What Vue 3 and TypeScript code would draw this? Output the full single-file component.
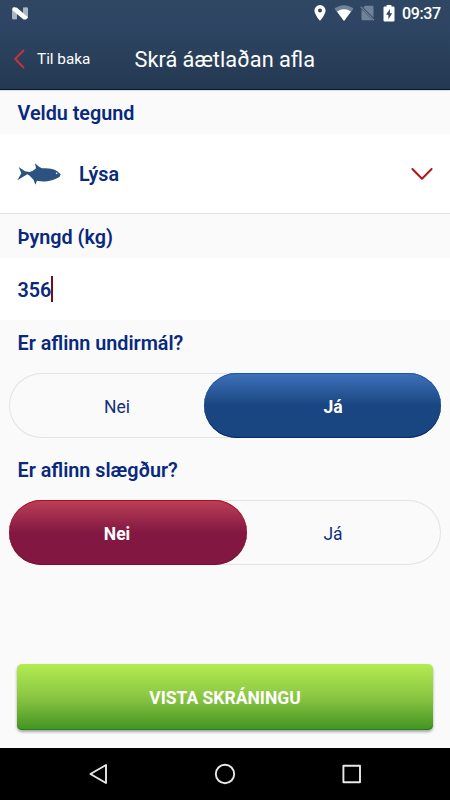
<script setup lang="ts">
import { ref } from 'vue'

type Tone = 'blue' | 'red'
interface Question {
  label: string
  value: 'Nei' | 'Já'
  tone: Tone
}

const species = ref('Lýsa')
const weight = ref('356')
const options: Array<'Nei' | 'Já'> = ['Nei', 'Já']
const questions = ref<Question[]>([
  { label: 'Er aflinn undirmál?', value: 'Já', tone: 'blue' },
  { label: 'Er aflinn slægður?', value: 'Nei', tone: 'red' },
])
</script>

<template>
  <div class="screen">
    <header class="header">
      <div class="status">
        <svg class="logo" width="16" height="13" viewBox="0 0 16 13">
          <path d="M0 1.500 5 6v6.200L1 12.600 0 11.500zM16 1v10.500l-5-4V.6L15 .2z" fill="#a9b5c3" />
          <path d="M1 .5C2 0 4 0 5 .8L15.400 9.700c.8.800-.5 2.500-1.500 2.700-1 .2-2.200.2-3-.5L.8 3.500C.1 2.700.2 1.100 1 .5z" fill="#fff" />
        </svg>
        <div class="tray">
          <svg class="pin" width="12" height="16" viewBox="0 0 12 16">
            <path fill-rule="evenodd" d="M6 0a5.600 5.600 0 0 0-5.600 5.600C.4 9.700 6 16 6 16s5.600-6.300 5.600-10.400A5.600 5.600 0 0 0 6 0zm0 3.600a2 2 0 1 1 0 4 2 2 0 0 1 0-4z" fill="#fff" />
          </svg>
          <svg class="wifi" width="20" height="16" viewBox="0 0 20 16">
            <path d="M.5 3.700C6-1 14-1 19.500 3.700L10 16z" fill="#71839a" />
            <path d="M3 6.600C7 3.300 13 3.300 17 6.600L10 16z" fill="#fff" />
          </svg>
          <svg class="sim" width="15" height="16" viewBox="0 0 15 16">
            <path d="M5 .7h7.500q1 0 1 1v10.700L3.300 2.400zM1.500 4.200 12.600 15.300H2.500q-1 0-1-1z" fill="#71839a" />
            <path d="m.6 1.600 13.300 13.700" stroke="#71839a" stroke-width="1.300" />
          </svg>
          <svg class="battery" width="12" height="17" viewBox="0 0 12 17">
            <path fill-rule="evenodd" d="M3.600 0h4.800v1.600h1.900q1.200 0 1.200 1.200v12.400q0 1.200-1.200 1.200H1.700Q.5 16.400.5 15.200V2.800q0-1.200 1.200-1.200h1.900zM6.900 4 3 9.800h2.400v4.500L9.200 8.300H6.900z" fill="#fff" />
          </svg>
          <span class="clock">09:37</span>
        </div>
      </div>
      <div class="bar">
        <button class="back">
          <svg width="12" height="20" viewBox="0 0 12 20">
            <path d="M9.500 1.500 1.200 10 9.500 18.500" fill="none" stroke="#c8323f" stroke-width="1.900" stroke-linecap="round" stroke-linejoin="round" />
          </svg>
          <span>Til baka</span>
        </button>
        <h1>Skrá áætlaðan afla</h1>
      </div>
    </header>

    <main class="content">
      <h2 class="label first">Veldu tegund</h2>
      <div class="picker">
        <svg class="fish" width="44" height="23" viewBox="0 0 132 69">
          <path d="M5 15 24 28 38 30C46 28 52 24 57 19L54 4 66 14 75 19C94 17 111 21 121 28L131 37 128 44C115 53 90 60 69 58L60 56 55 68 50 54 38 41 31 37 21 43 1 55 13 34z" fill="#2c5282" />
          <circle cx="119" cy="34" r="2.500" fill="#fff" />
        </svg>
        <span class="species">{{ species }}</span>
        <svg class="chevron" width="24" height="16" viewBox="0 0 24 16">
          <path d="m2.400 3 9.600 9.700L21.600 3" fill="none" stroke="#b3131d" stroke-width="2" stroke-linecap="round" stroke-linejoin="round" />
        </svg>
      </div>
      <h2 class="label">Þyngd (kg)</h2>
      <div class="field"><span>{{ weight }}</span><i class="caret"></i></div>

      <section v-for="q in questions" :key="q.label" class="question">
        <h2 class="label">{{ q.label }}</h2>
        <div class="toggle" :class="q.tone">
          <button
            v-for="o in options"
            :key="o"
            class="option"
            :class="{ selected: q.value === o }"
            @click="q.value = o"
          >
            {{ o }}
          </button>
        </div>
      </section>

      <button class="save">VISTA SKRÁNINGU</button>
    </main>

    <nav class="nav">
      <svg width="20" height="22" viewBox="0 0 20 22">
        <path d="M18 2v18L2.400 11z" fill="none" stroke="#e8e8e8" stroke-width="1.900" stroke-linejoin="round" />
      </svg>
      <svg width="22" height="22" viewBox="0 0 22 22">
        <circle cx="11" cy="11" r="9.200" fill="none" stroke="#e8e8e8" stroke-width="1.900" />
      </svg>
      <svg width="20" height="22" viewBox="0 0 20 22">
        <rect x="1.400" y="2.700" width="16.600" height="16.600" fill="none" stroke="#e8e8e8" stroke-width="1.900" stroke-linejoin="round" />
      </svg>
    </nav>
  </div>
</template>

<style>
body {
  margin: 0;
}
</style>

<style scoped>
.screen {
  width: 450px;
  height: 800px;
  display: flex;
  flex-direction: column;
  background: #fafafb;
  color: #08297c;
  font-family: Roboto, "Liberation Sans", sans-serif;
  overflow: hidden;
}
svg {
  display: block;
  flex: none;
}
button {
  font-family: inherit;
  border: 0;
  padding: 0;
  background: none;
}
.header {
  height: 90px;
  box-sizing: border-box;
  border-bottom: 1px solid #0b1638;
  background: linear-gradient(#2f4763 0, #2d4562 30px, #243851 89px);
  color: #fff;
}
.status {
  height: 28px;
  display: flex;
  justify-content: space-between;
  padding: 0 8px 0 12px;
}
.logo {
  margin-top: 7px;
}
.tray {
  display: flex;
  align-items: flex-start;
  padding-top: 5px;
}
.wifi {
  margin-left: 8px;
}
.sim {
  margin-left: 6px;
}
.battery {
  margin-left: 8px;
}
.clock {
  margin-left: 7px;
  width: 40px;
  font-size: 16px;
  font-weight: 500;
  line-height: 18px;
  letter-spacing: -0.350px;
}
.bar {
  height: 61px;
  display: flex;
  align-items: center;
}
.back {
  display: flex;
  align-items: center;
  gap: 11px;
  width: 120.500px;
  padding-left: 14px;
  box-sizing: content-box;
  color: #fff;
  font-size: 15.300px;
}
.bar h1 {
  margin: 0;
  padding-top: 2px;
  font-size: 21.750px;
  font-weight: 400;
  line-height: 30px;
  white-space: nowrap;
}
.content {
  height: 658px;
  display: flex;
  flex-direction: column;
  border-top: 1px solid #dcdce4;
  box-sizing: border-box;
}
.label {
  margin: 0;
  padding-left: 17.500px;
  height: 44px;
  line-height: 47px;
  font-size: 19.750px;
  font-weight: 600;
}
.label.first {
  height: 43px;
  line-height: 45px;
}
.picker {
  height: 80px;
  box-sizing: border-box;
  display: flex;
  align-items: center;
  padding: 0 16px 0 17px;
  background: #fff;
  border-bottom: 1px solid #e2e2e4;
}
.species {
  margin-left: 18px;
  flex: 1;
  font-size: 19.750px;
  font-weight: 600;
  line-height: 24px;
  padding-top: 3px;
}
.field {
  height: 62px;
  box-sizing: border-box;
  display: flex;
  align-items: center;
  padding-left: 17.500px;
  background: #fff;
  font-size: 19.750px;
  font-weight: 600;
}
.field span {
  line-height: 24px;
  padding-top: 4px;
}
.caret {
  width: 2px;
  height: 26px;
  background: #760b12;
}
.question {
  height: 127px;
}
.question .label {
  height: 53px;
}
.toggle {
  height: 65px;
  margin: 0 9px;
  box-sizing: border-box;
  display: flex;
  border-radius: 33px;
  box-shadow: inset 0 0 0 1px #e3e3e5;
}
.option {
  flex: 1;
  padding-top: 2px;
  color: #10307a;
  font-size: 17.500px;
}
.selected {
  color: #fff;
  font-weight: 700;
  border-radius: 33px;
}
.selected:first-child {
  margin-right: -21.500px;
  padding-right: 21.500px;
}
.selected:last-child {
  margin-left: -21.500px;
  padding-left: 21.500px;
}
.blue .selected {
  background: linear-gradient(#3f72bb 0, #194681 50%, #194681 100%);
  box-shadow: inset 0 1px #1b58a8, inset 0 -1px #062869;
}
.red .selected {
  background: linear-gradient(#bd4057 0, #821841 50%, #821841 100%);
  box-shadow: inset 0 1px #b00d1a, inset 0 -1px #860b2b;
}
.save {
  height: 66px;
  margin: auto 17.400px 18px;
  padding-top: 2px;
  border-radius: 5px;
  background: linear-gradient(#b2ec51 0, #8bc643 50%, #429321 100%);
  box-shadow: inset 0 -1px #168416, 0 2px 3px rgba(0, 0, 0, 0.35);
  color: #fff;
  font-size: 17.500px;
  font-weight: 700;
}
.nav {
  height: 52px;
  display: flex;
  justify-content: center;
  align-items: center;
  gap: 106px;
  background: #000;
}
</style>
